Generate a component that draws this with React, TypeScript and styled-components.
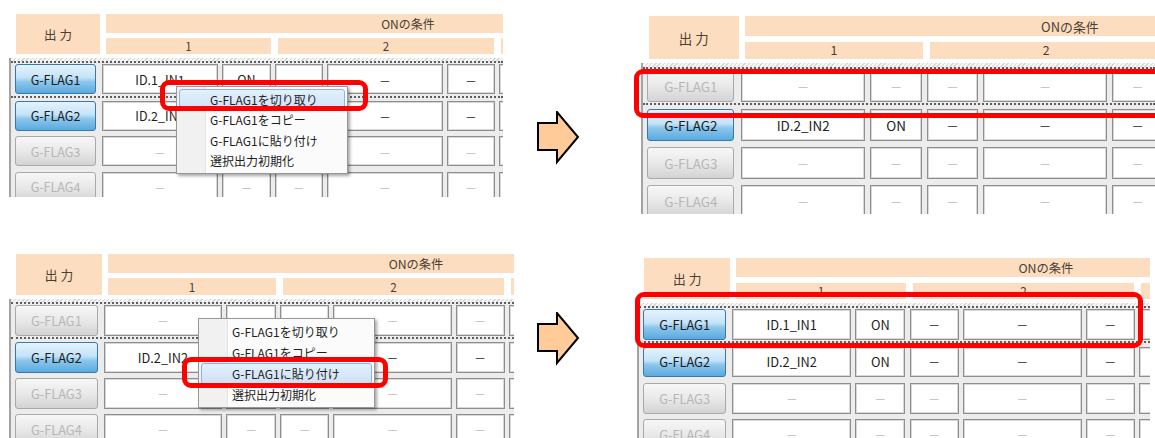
import React from 'react';
import styled, {createGlobalStyle, css} from 'styled-components';

const GlobalStyle = createGlobalStyle`
  html, body {
    margin: 0;
    padding: 0;
    background: #fff;
  }
  body {
    font-family: "Noto Sans CJK JP", "Noto Sans", sans-serif;
  }
`

const Page = styled.div`
  width: 1155px;
  height: 438px;
  overflow: hidden;
  display: grid;
  grid-template-columns: 9px 528px 100px 518px;
  grid-template-rows: 248px 190px;
`

const Slot = styled.div<{ $col: number; $row: number; $shift?: number }>`
  grid-column: ${p => p.$col};
  grid-row: ${p => p.$row};
  position: relative;
  margin-left: ${p => p.$shift ?? 0}px;
`

const Frame = styled.div<{ $w: number; $h: number; $top: number }>`
  width: ${p => p.$w}px;
  height: ${p => p.$h}px;
  padding-top: ${p => p.$top}px;
  box-sizing: border-box;
  overflow: hidden;
  position: relative;
  background: #fff;
`

const HeadRow = styled.div`
  display: flex;
  gap: calc(6px * var(--k));
  padding-left: calc(7px * var(--k));
`

const peach = '#fcddc0'

const OutHead = styled.div`
  flex: none;
  width: calc(84px * var(--k));
  height: calc(40px * var(--k));
  background: ${peach};
  display: flex;
  align-items: center;
  justify-content: center;
  font-size: calc(12.5px * var(--k));
  color: #4a3d33;
  white-space: pre;
`

const CondHead = styled.div`
  flex: none;
  display: flex;
  flex-direction: column;
  gap: calc(5px * var(--k));
`

const Band = styled.div`
  width: calc(604px * var(--k));
  height: calc(19px * var(--k));
  background: ${peach};
  display: flex;
  align-items: center;
  justify-content: center;
  font-size: calc(12px * var(--k));
  color: #4a3d33;
`

const SubRow = styled.div`
  display: flex;
  gap: calc(7px * var(--k));
`

const Sub = styled.div<{ $w: number }>`
  flex: none;
  width: calc(${p => p.$w}px * var(--k));
  height: calc(16px * var(--k));
  background: ${peach};
  display: flex;
  align-items: center;
  justify-content: center;
  font-size: calc(11.5px * var(--k));
  color: #4a3d33;
`

const Table = styled.div`
  margin-top: calc(4px * var(--k));
  border-left: 2px solid #a3a3a3;
  background: #ececec;
  height: 400px;
`

const Hatch = styled.div`
  height: calc(3px * var(--k));
  background: repeating-linear-gradient(135deg, #d6d6d6 0 1px, #f6f6f6 1px 3px);
`

const Row = styled.div<{ $sel?: boolean }>`
  display: flex;
  gap: calc(4px * var(--k));
  padding: calc(3px * var(--k)) 0 calc(2.5px * var(--k)) calc(4px * var(--k));
  ${p => p.$sel && css`
    border-top: 2px dotted #5e5e5e;
    border-bottom: 2px dotted #5e5e5e;
    padding-top: calc(1px * var(--k));
    padding-bottom: calc(1.5px * var(--k));
  `}
`

const FlagButton = styled.div<{ $on: boolean }>`
  flex: none;
  box-sizing: border-box;
  width: calc(81px * var(--k));
  height: calc(30px * var(--k));
  margin-right: calc(2px * var(--k));
  border-radius: 3px;
  display: flex;
  align-items: center;
  justify-content: center;
  font-size: calc(12.5px * var(--k));
  ${p => p.$on ? css`
    border: 1px solid #3a78a8;
    background: linear-gradient(#e4f3fd 0%, #c4e3f8 45%, #8cc6ec 60%, #5aaadf 100%);
    color: #1b1b1b;
  ` : css`
    border: 1px solid #a9a9a9;
    background: linear-gradient(#f7f7f7 0%, #e9e9e9 50%, #d3d3d3 100%);
    color: #b7b7b7;
  `}
`

const Cell = styled.div<{ $w: number; $off: boolean }>`
  flex: none;
  box-sizing: border-box;
  width: calc(${p => p.$w}px * var(--k));
  height: calc(30px * var(--k));
  background: #fff;
  border: 1px solid #8e8e8e;
  box-shadow: inset 0 0 0 1px #d8d8d8;
  display: flex;
  align-items: center;
  justify-content: center;
  font-size: calc(12.5px * var(--k));
  color: ${p => p.$off ? '#bababa' : '#1d1d1d'};
`

const Dash = styled.span`
  font-size: calc(10.5px * var(--k));
`

const Menu = styled.div<{ $l: number; $t: number; $w: number }>`
  position: absolute;
  left: ${p => p.$l}px;
  top: ${p => p.$t}px;
  width: ${p => p.$w}px;
  box-sizing: border-box;
  padding: 2px;
  border: 1px solid #979797;
  background: linear-gradient(to right, #f1f1f1 0 28px, #e3e3e3 28px 29px, #fff 29px 30px, #fbfbfb 30px);
  box-shadow: 2px 2px 3px rgba(0, 0, 0, 0.35);
  z-index: 3;
`

const MenuItem = styled.div<{ $hot?: boolean; $h: number }>`
  height: ${p => p.$h}px;
  box-sizing: border-box;
  padding-left: 30px;
  display: flex;
  align-items: center;
  font-size: 12px;
  color: #1e1e1e;
  border: 1px solid transparent;
  border-radius: 3px;
  ${p => p.$hot && css`
    background: linear-gradient(#e4f0fc, #cde2f7);
    border-color: #86b6e6;
  `}
`

const Callout = styled.div<{ $l: number; $t: number; $w: number; $h: number }>`
  position: absolute;
  left: ${p => p.$l}px;
  top: ${p => p.$t}px;
  width: ${p => p.$w}px;
  height: ${p => p.$h}px;
  box-sizing: border-box;
  border: 5px solid #ff0000;
  border-radius: 9px;
  z-index: 5;
`

const ArrowBox = styled.div<{ $row: number; $top: number }>`
  grid-column: 3;
  grid-row: ${p => p.$row};
  padding-top: ${p => p.$top}px;
`

const widths = [116, 49, 48, 116, 48, 116, 49]
const subs = [165, 216, 165]

interface IRow {
  label: string
  on: boolean
  cells: string[]
}

const D = '–'
const offCells = widths.map(() => D)

const rowsBefore: IRow[] = [
  {label: 'G-FLAG1', on: true, cells: ['ID.1_IN1', 'ON', D, D, D, D, D]},
  {label: 'G-FLAG2', on: true, cells: ['ID.2_IN2', 'ON', D, D, D, D, D]},
  {label: 'G-FLAG3', on: false, cells: offCells},
  {label: 'G-FLAG4', on: false, cells: offCells},
]

const rowsCut: IRow[] = [
  {label: 'G-FLAG1', on: false, cells: offCells},
  {label: 'G-FLAG2', on: true, cells: ['ID.2_IN2', 'ON', D, D, D, D, D]},
  {label: 'G-FLAG3', on: false, cells: offCells},
  {label: 'G-FLAG4', on: false, cells: offCells},
]

const menuItems = ['G-FLAG1を切り取り', 'G-FLAG1をコピー', 'G-FLAG1に貼り付け', '選択出力初期化']

interface IMenu {
  l: number
  t: number
  w: number
  item: number
  hot: number
}

interface IPanel {
  k: number
  w: number
  h: number
  top: number
  rows: IRow[]
  menu?: IMenu
}

function Panel({k, w, h, top, rows, menu}: IPanel) {
  return (
    <Frame $w={w} $h={h} $top={top} style={{['--k' as string]: k}}>
      <HeadRow>
        <OutHead>出 力</OutHead>
        <CondHead>
          <Band>ONの条件</Band>
          <SubRow>
            {subs.map((s, i) => <Sub key={i} $w={s}>{i < 2 ? i + 1 : ''}</Sub>)}
          </SubRow>
        </CondHead>
      </HeadRow>
      <Table>
        <Hatch/>
        {rows.map((r, i) => (
          <Row key={r.label} $sel={i === 0}>
            <FlagButton $on={r.on}>{r.label}</FlagButton>
            {r.cells.map((c, j) => (
              <Cell key={j} $w={widths[j]} $off={!r.on}>
                {c === D ? <Dash>—</Dash> : c}
              </Cell>
            ))}
          </Row>
        ))}
      </Table>
      {menu && (
        <Menu $l={menu.l} $t={menu.t} $w={menu.w}>
          {menuItems.map((m, i) => (
            <MenuItem key={m} $h={menu.item} $hot={i === menu.hot}>{m}</MenuItem>
          ))}
        </Menu>
      )}
    </Frame>
  )
}

function Arrow() {
  return (
    <svg width="44" height="54" viewBox="0 0 44 54">
      <polygon
        points="1,12 20,12 20,1 41,26 20,51 20,39 1,39"
        fill="#ffcc99"
        stroke="#000"
        strokeWidth="2"
        strokeLinejoin="miter"
      />
    </svg>
  )
}

function App() {
  return (
    <>
      <GlobalStyle/>
      <Page>
        <Slot $col={2} $row={1}>
          <Panel k={1} w={494} h={197} top={14} rows={rowsBefore}
                 menu={{l: 167, t: 86, w: 172, item: 20.5, hot: 0}}/>
          <Callout $l={151} $t={80} $w={208} $h={31}/>
        </Slot>
        <ArrowBox $row={1} $top={111}><Arrow/></ArrowBox>
        <Slot $col={4} $row={1} $shift={4}>
          <Panel k={1.075} w={514} h={214} top={16} rows={rowsCut}/>
          <Callout $l={-7} $t={69} $w={530} $h={49}/>
        </Slot>

        <Slot $col={2} $row={2}>
          <Panel k={1.02} w={505} h={190} top={6} rows={rowsCut}
                 menu={{l: 189, t: 70, w: 177, item: 21, hot: 2}}/>
          <Callout $l={173} $t={109} $w={206} $h={31}/>
        </Slot>
        <ArrowBox $row={2} $top={64}><Arrow/></ArrowBox>
        <Slot $col={4} $row={2}>
          <Panel k={1.025} w={513} h={190} top={10} rows={rowsBefore}/>
          <Callout $l={-2} $t={44} $w={508} $h={56}/>
        </Slot>
      </Page>
    </>
  )
}

export default App;
